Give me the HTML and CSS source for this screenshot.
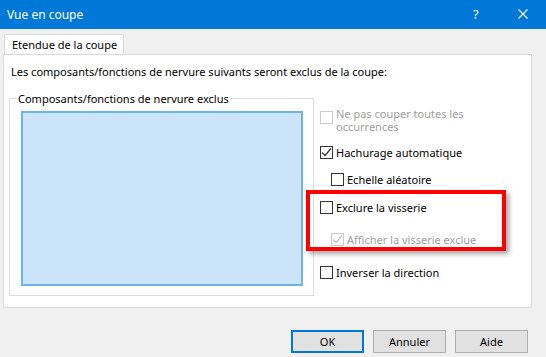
FILE: index.html
```html
<!DOCTYPE html>
<html lang="fr">
<head>
  <meta charset="UTF-8">
  <title>Vue en coupe</title>
  <link rel="stylesheet" href="styles.css">
</head>
<body>
  <div class="titlebar">
    <span class="title">Vue en coupe</span>
    <span class="help">?</span>
    <span class="close">
      <svg width="10" height="10" viewBox="0 0 10 10"><path d="M0.5 0.5 L9.5 9.5 M9.5 0.5 L0.5 9.5" stroke="#fff" stroke-width="1.1" fill="none"/></svg>
    </span>
  </div>

  <div class="dialog">
    <div class="tabs">
      <div class="tab">Etendue de la coupe</div>
    </div>
    <div class="panel">
      <p class="intro">Les composants/fonctions de nervure suivants seront exclus de la coupe:</p>
      <div class="content">
        <fieldset class="group">
          <legend>Composants/fonctions de nervure exclus</legend>
          <div class="listbox"></div>
        </fieldset>

        <div class="options">
          <label class="option two-lines disabled">
            <span class="box"></span>
            <span class="text">Ne pas couper toutes les<br>occurrences</span>
          </label>
          <label class="option row-hatch">
            <span class="box checked"><svg width="11" height="11" viewBox="0 0 11 11"><path d="M1 5.5 L4 8.5 L10 1.5" stroke="#333" stroke-width="1.2" fill="none"/></svg></span>
            <span class="text">Hachurage automatique</span>
          </label>
          <label class="option indent row-scale">
            <span class="box"></span>
            <span class="text">Echelle aléatoire</span>
          </label>
          <label class="option row-exclude">
            <span class="box"></span>
            <span class="text">Exclure la visserie</span>
          </label>
          <label class="option indent disabled row-show">
            <span class="box checked"><svg width="11" height="11" viewBox="0 0 11 11"><path d="M1 5.5 L4 8.5 L10 1.5" stroke="#c4c4c4" stroke-width="1.2" fill="none"/></svg></span>
            <span class="text">Afficher la visserie exclue</span>
          </label>
          <label class="option row-invert">
            <span class="box"></span>
            <span class="text">Inverser la direction</span>
          </label>

          <div class="highlight"></div>
        </div>
      </div>
    </div>

    <div class="buttons">
      <button class="btn default">OK</button>
      <button class="btn">Annuler</button>
      <button class="btn">Aide</button>
    </div>
  </div>
</body>
</html>
```

FILE: styles.css
```css
body {
  margin: 0;
  padding: 0;
  width: 546px;
  height: 357px;
  overflow: hidden;
  background-color: #f0f0f0;
  font-family: "Noto Sans", "Open Sans", sans-serif;
  font-size: 11px;
  color: #000;
}

.titlebar {
  height: 29px;
  display: flex;
  align-items: center;
  padding-left: 7px;
  background-color: #0078d7;
  color: #fff;
  font-size: 12px;
}

.title {
  flex: 1;
  line-height: 15px;
  margin-top: -1px;
}

.help {
  width: 8px;
  font-size: 13px;
  margin-right: 37px;
  margin-top: -1px;
}

.close {
  display: flex;
  width: 10px;
  height: 10px;
  margin-right: 18px;
  margin-top: -2px;
}

.dialog {
  padding: 5px 14px 0 3px;
}

.tabs {
  display: flex;
  height: 20px;
}

.tab {
  width: 120px;
  height: 20px;
  margin-left: 1px;
  padding-left: 7px;
  box-sizing: border-box;
  background-color: #fff;
  border: 1px solid #d9d9d9;
  border-bottom: none;
  line-height: 19px;
  white-space: nowrap;
  position: relative;
  z-index: 1;
}

.panel {
  height: 254px;
  box-sizing: border-box;
  border: 1px solid #d9d9d9;
  background-color: #fff;
  padding: 9px 0 0 7px;
}

.intro {
  margin: 0;
  line-height: 15px;
}

.content {
  display: flex;
  align-items: flex-start;
  gap: 6px;
  margin-top: 12px;
  margin-left: -2px;
}

.group {
  width: 305px;
  height: 205px;
  box-sizing: border-box;
  margin: 0;
  padding: 5px 10px 8px 11px;
  border: 1px solid #dcdcdc;
}

.group legend {
  margin-left: -5px;
  padding: 0 2px;
  line-height: 15px;
}

.listbox {
  width: 282px;
  height: 175px;
  box-sizing: border-box;
  background-color: #cce4f7;
  border: 2px solid #6cb4e8;
}

.options {
  position: relative;
  padding-top: 16px;
  flex: 1;
}

.option {
  display: flex;
  align-items: center;
  gap: 3px;
  line-height: 15px;
  white-space: nowrap;
}

.box {
  width: 13px;
  height: 13px;
  box-sizing: border-box;
  border: 1px solid #333;
  background-color: #fff;
  flex-shrink: 0;
  display: flex;
  align-items: center;
  justify-content: center;
}

.disabled {
  color: #a0a0a0;
}

.disabled .box {
  border-color: #cccccc;
}

.two-lines {
  align-items: flex-start;
  line-height: 13px;
}

.two-lines .box {
  margin-top: 4px;
}

.indent {
  margin-left: 11px;
}

.row-hatch { margin-top: 12px; }
.row-scale { margin-top: 12px; }
.row-exclude { margin-top: 13px; }
.row-show { margin-top: 17px; }
.row-invert { margin-top: 18px; }

.highlight {
  position: absolute;
  left: -14px;
  top: 99px;
  width: 200px;
  height: 61px;
  box-sizing: border-box;
  border: 4px solid #ff0000;
  box-shadow: 3px 3px 5px rgba(0, 0, 0, 0.35);
}

.buttons {
  display: flex;
  justify-content: flex-end;
  gap: 9px;
  margin-top: 22px;
  margin-right: 4px;
}

.btn {
  width: 73px;
  height: 23px;
  padding: 0;
  font-family: inherit;
  font-size: 11px;
  color: #000;
  background-color: #e1e1e1;
  border: 1px solid #adadad;
}

.btn.default {
  border: 2px solid #0078d7;
}
```
